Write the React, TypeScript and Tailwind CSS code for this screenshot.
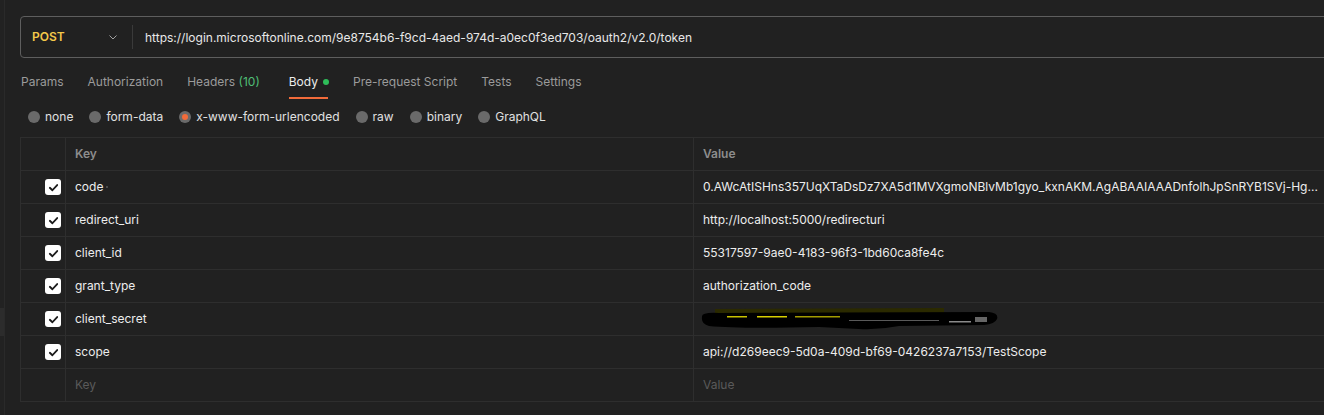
import React from "react";

const rows = [
  { k: "code", v: "0.AWcAtISHns357UqXTaDsDz7XA5d1MVXgmoNBlvMb1gyo_kxnAKM.AgABAAIAAADnfolhJpSnRYB1SVj-Hg...", dot: true },
  { k: "redirect_uri", v: "http://localhost:5000/redirecturi" },
  { k: "client_id", v: "55317597-9ae0-4183-96f3-1bd60ca8fe4c" },
  { k: "grant_type", v: "authorization_code" },
  { k: "client_secret", v: "", redacted: true },
  { k: "scope", v: "api://d269eec9-5d0a-409d-bf69-0426237a7153/TestScope" },
];

function Check() {
  return (
    <div className="w-4 h-4 rounded-[3px] bg-white flex items-center justify-center">
      <svg width="11" height="11" viewBox="0 0 12 12">
        <path d="M2 6.3 L4.8 9 L10 3.3" fill="none" stroke="#1b1b1b" strokeWidth="2" strokeLinecap="round" strokeLinejoin="round" />
      </svg>
    </div>
  );
}

function Redacted() {
  return (
    <svg width="300" height="26" viewBox="0 0 300 26" className="block">
      <path d="M16 3 L245 2 L245 9 L16 10 Z" fill="#2b2a00" />
      <path d="M3 11 Q2 6 20 7 L290 6 Q300 7 298 13 Q296 18 285 19 L200 20 Q180 24 160 23 L120 21 Q40 23 10 20 Q2 18 3 11 Z" fill="#000" />
      <rect x="28" y="10" width="20" height="1.5" fill="#c9c200" />
      <rect x="58" y="10" width="30" height="1.5" fill="#d8cf00" />
      <rect x="96" y="10" width="45" height="1.5" fill="#a39c00" />
      <rect x="150" y="14" width="90" height="1" fill="#5a5a5a" />
      <rect x="250" y="15" width="22" height="1.5" fill="#8a8a8a" />
      <rect x="276" y="11" width="12" height="5" fill="#666" />
    </svg>
  );
}

export default function App() {
  const font = { fontFamily: "Inter, 'Noto Sans', sans-serif" };
  return (
    <div className="w-[1324px] h-[415px] bg-[#212121] overflow-hidden flex text-[12px]" style={font}>
      <div className="w-[5px] h-full border-r border-[#2a2a2a] bg-[#222222] flex flex-col">
        <div className="h-[308px]" />
        <div className="h-[28px] bg-[#2c2c2c]" />
      </div>
      <div className="flex-1 flex flex-col pl-[15px]">
        {/* URL bar */}
        <div className="mt-[16px] h-[42px] -mr-[10px] border border-[#5e5e5e] rounded-[4px] flex items-center">
          <div className="w-[111px] pl-[11px] flex items-center justify-between pr-[14px]">
            <span className="font-semibold text-[#f4c84a] text-[12px]">POST</span>
            <svg width="10" height="10" viewBox="0 0 10 10">
              <path d="M1.5 3.5 L5 7 L8.5 3.5" fill="none" stroke="#a0a0a0" strokeWidth="1" />
            </svg>
          </div>
          <div className="w-px h-[24px] bg-[#3a3a3a]" />
          <div className="pl-[12px] text-[#e8e8e8] pt-[1px]">
            https://login.microsoftonline.com/9e8754b6-f9cd-4aed-974d-a0ec0f3ed703/oauth2/v2.0/token
          </div>
        </div>

        {/* Tabs */}
        <div className="flex items-start gap-[24px] h-[41px] pt-[15px] pl-[1px] text-[#9b9b9b]">
          <span>Params</span>
          <span>Authorization</span>
          <span className="pr-[5px]">Headers <span className="text-[#4fbf76]">(10)</span></span>
          <div className="flex flex-col">
            <div className="flex items-center text-[#ececec]">
              Body<span className="ml-[5px] w-[6px] h-[6px] rounded-full bg-[#2ebd59]" />
            </div>
            <div className="mt-[6px] h-[1.5px] bg-[#f26b3a] w-[39px]" />
          </div>
          <span>Pre-request Script</span>
          <span>Tests</span>
          <span>Settings</span>
        </div>

        {/* Radio row */}
        <div className="mt-[4px] flex items-center gap-[16px] h-[28px] pl-[8px] text-[#e0e0e0]">
          {[
            ["none", false],
            ["form-data", false],
            ["x-www-form-urlencoded", true],
            ["raw", false],
            ["binary", false],
            ["GraphQL", false],
          ].map(([label, on]) => (
            <div key={label as string} className="flex items-center">
              <span className="w-[12px] h-[12px] rounded-full bg-[#6a6a6a] flex items-center justify-center mr-[5px]">
                {on ? <span className="w-[6px] h-[6px] rounded-full bg-[#f26b3a]" /> : null}
              </span>
              <span>{label as string}</span>
            </div>
          ))}
        </div>

        {/* Table */}
        <div className="mt-[6px] border border-[#2e2e2e] -mr-[10px] w-[1313px]">
          <div className="flex h-[33px] border-b border-[#2e2e2e]">
            <div className="w-[45px] border-r border-[#2e2e2e]" />
            <div className="w-[628px] border-r border-[#2e2e2e] pl-[9px] flex items-center font-semibold text-[#8d8d8d]">Key</div>
            <div className="flex-1 pl-[9px] flex items-center font-semibold text-[#8d8d8d]">Value</div>
          </div>
          {rows.map((r) => (
            <div key={r.k} className="flex h-[33px] border-b border-[#2e2e2e] text-[#ededed]">
              <div className="w-[45px] border-r border-[#2e2e2e] flex items-center justify-end pr-[4px]">
                <Check />
              </div>
              <div className="w-[628px] border-r border-[#2e2e2e] pl-[9px] flex items-center">
                {r.k}
                {r.dot ? <span className="ml-[3px] w-[2px] h-[2px] rounded-full bg-[#5a5a5a]" /> : null}
              </div>
              <div className="flex-1 pl-[9px] flex items-center whitespace-nowrap overflow-hidden">
                {r.redacted ? <div className="-ml-[4px]"><Redacted /></div> : r.v}
              </div>
            </div>
          ))}
          <div className="flex h-[32px] text-[#5a5a5a]">
            <div className="w-[45px] border-r border-[#2e2e2e]" />
            <div className="w-[628px] border-r border-[#2e2e2e] pl-[9px] flex items-center">Key</div>
            <div className="flex-1 pl-[9px] flex items-center">Value</div>
          </div>
        </div>
      </div>
    </div>
  );
}
